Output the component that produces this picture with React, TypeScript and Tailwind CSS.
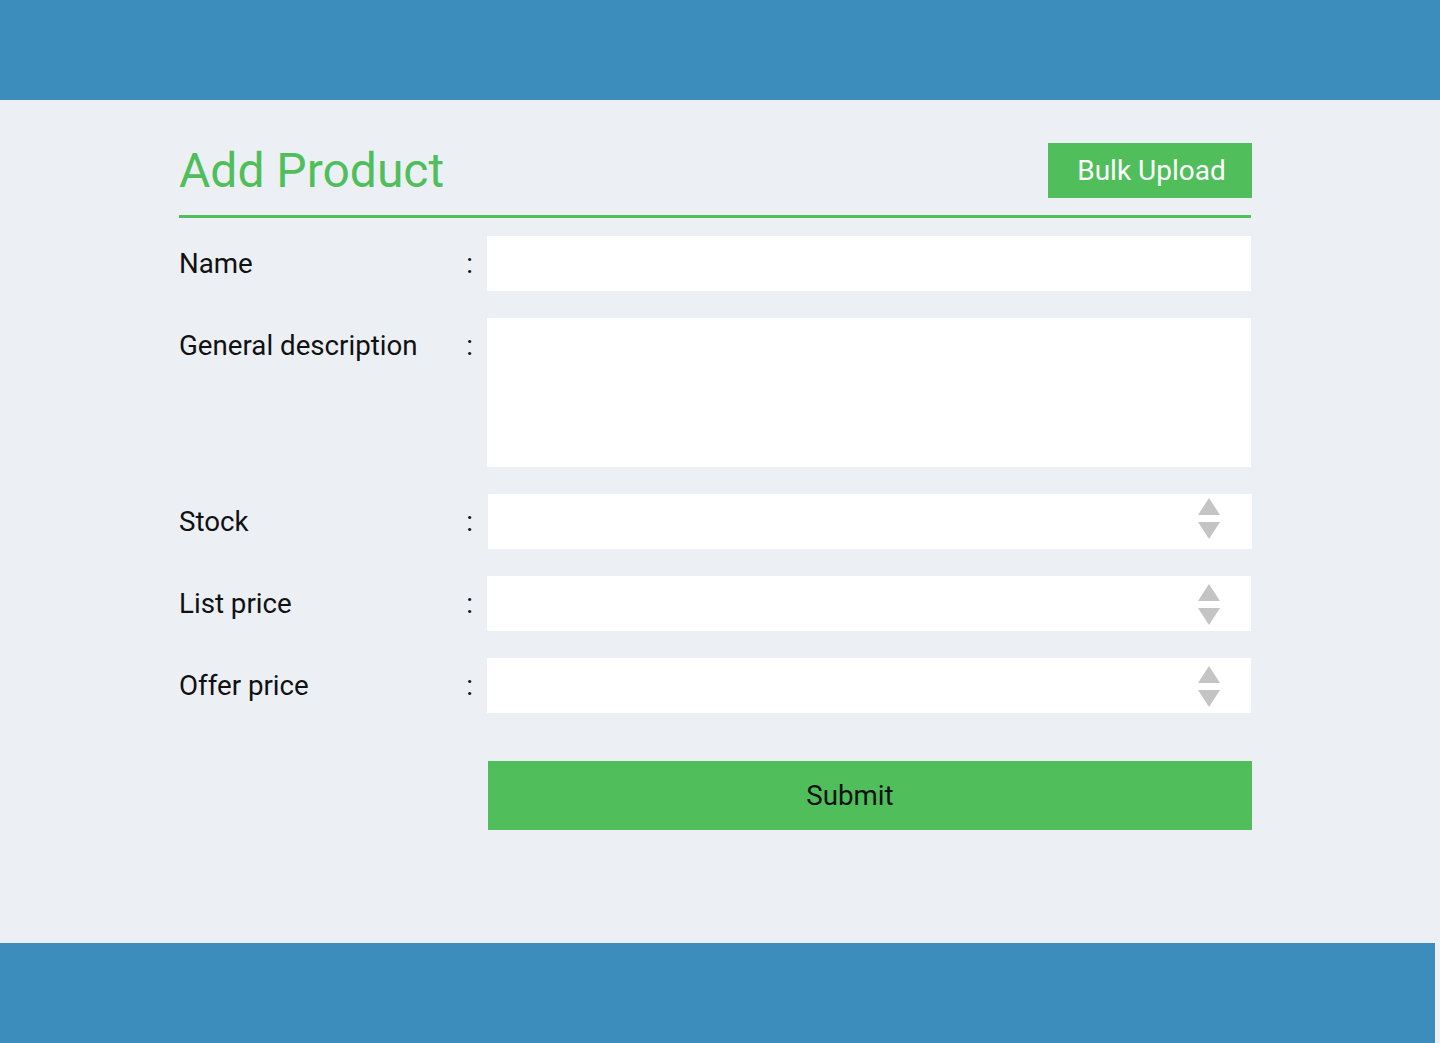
const fields = [
  { label: 'Name', kind: 'text' },
  { label: 'General description', kind: 'textarea' },
  { label: 'Stock', kind: 'number', shift: true },
  { label: 'List price', kind: 'number' },
  { label: 'Offer price', kind: 'number' },
];

function Spinner({ high }: { high?: boolean }) {
  return (
    <svg
      width="22"
      height="41"
      viewBox="0 0 22 41"
      className={`absolute ${high ? 'right-[32px] top-[4px]' : 'right-[31px] top-[8px]'}`}
      aria-hidden
    >
      <polygon points="11,0 22,17 0,17" fill="#c4c4c4" />
      <polygon points="0,24 22,24 11,41" fill="#c4c4c4" />
    </svg>
  );
}

export default function App() {
  return (
    <div className="flex min-h-[1043px] flex-col bg-[#ecf0f5] font-['Roboto',sans-serif]">
      <header className="h-[100px] w-full bg-[#3c8dbc]" />

      <main className="h-[843px] pl-[179px]">
        <div className="w-[1072px]">
          <div className="mt-[43px] flex h-[55px] items-center justify-between">
            <h1 className="text-[48px] font-normal leading-none text-[#4fbe5b]">Add Product</h1>
            <button className="mr-[-1px] flex h-[55px] w-[204px] items-center justify-center bg-[#4fbe5b] pl-[3px] text-[28px] text-white">
              Bulk Upload
            </button>
          </div>
          <div className="mt-[17px] h-[3px] bg-[#4fbe5b]" />

          <form className="mt-[18px] flex flex-col gap-[27px]">
            {fields.map((f) => (
              <div key={f.label} className="flex items-start">
                <div className="flex h-[55px] w-[308px] items-center justify-between pr-[14px] text-[27.7px] text-[#111]">
                  <span>{f.label}</span>
                  <span>:</span>
                </div>
                {f.kind === 'textarea' ? (
                  <textarea className="h-[149px] flex-1 resize-none bg-white outline-none" />
                ) : (
                  <div className={`relative h-[55px] flex-1 bg-white ${f.shift ? 'ml-[1px] mr-[-1px]' : ''}`}>
                    <input type="text" className="h-full w-full bg-transparent px-3 text-[20px] outline-none" />
                    {f.kind === 'number' && <Spinner high={f.shift} />}
                  </div>
                )}
              </div>
            ))}

            <div className="mt-[21px] flex">
              <div className="w-[309px]" />
              <button
                type="button"
                className="mr-[-1px] flex h-[69px] flex-1 items-center justify-center bg-[#4fbe5b] pr-[40px] text-[27.7px] text-[#111]"
              >
                Submit
              </button>
            </div>
          </form>
        </div>
      </main>

      <footer className="h-[100px] w-[1435px] bg-[#3c8dbc]" />
    </div>
  );
}
